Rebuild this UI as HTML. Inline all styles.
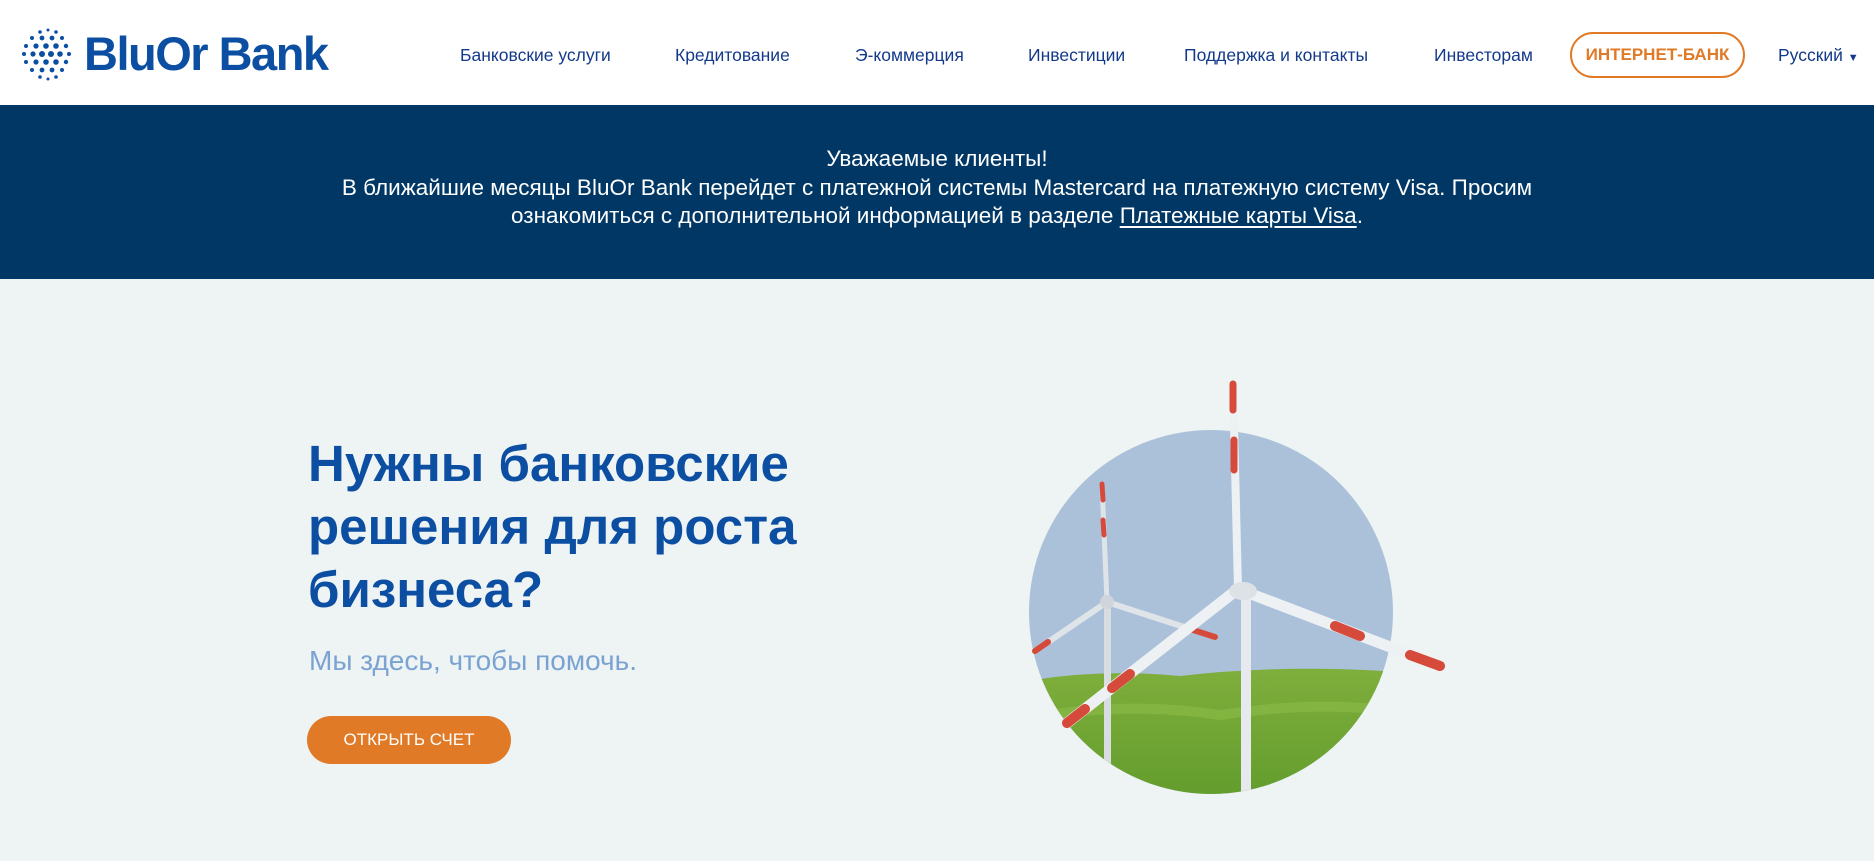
<!DOCTYPE html>
<html><head><meta charset="utf-8"><style>
*{margin:0;padding:0;box-sizing:border-box}
body{width:1874px;height:861px;overflow:hidden;font-family:"Liberation Sans",sans-serif;background:#eef3f4;position:relative}
header{position:absolute;left:0;top:0;width:1874px;height:105px;background:#fff}
.logo{position:absolute;left:84px;top:26px;font-size:47px;font-weight:bold;color:#0b4ea2;letter-spacing:-1.5px}
nav a{position:absolute;top:45px;font-size:17.5px;color:#133a8a;text-decoration:none;white-space:nowrap}
.ib{position:absolute;left:1570px;top:32px;width:175px;height:46px;border:2px solid #e07a26;border-radius:23px;color:#e07a26;font-weight:bold;font-size:17px;text-align:center;line-height:42px}
.banner{position:absolute;top:105px;left:0;width:1874px;height:174px;background:#003764;color:#fff;text-align:center;font-size:22.5px;line-height:28.5px;padding-top:40px}
.banner u{text-underline-offset:3px}
h1{position:absolute;left:308px;top:432px;font-size:51px;line-height:63px;color:#0b4ea2;font-weight:bold;letter-spacing:0px}
.sub{position:absolute;left:309px;top:645px;font-size:28px;color:#7aa3d2}
.btn{position:absolute;left:307px;top:716px;width:204px;height:48px;background:#e07a26;border-radius:24px;color:#fff;font-size:17px;text-align:center;line-height:48px}
</style></head><body>
<header>
<svg style="position:absolute;left:20px;top:26px" width="56" height="56" viewBox="0 0 56 56">
<g fill="#0b4ea2">
<circle cx="28" cy="4" r="1.5"/><circle cx="20" cy="6" r="1.8"/><circle cx="36" cy="6" r="1.8"/>
<circle cx="12" cy="12" r="2"/><circle cx="22" cy="12" r="2.4"/><circle cx="32" cy="12" r="2.4"/><circle cx="42" cy="12" r="2"/>
<circle cx="6" cy="20" r="2"/><circle cx="16" cy="20" r="2.6"/><circle cx="26" cy="20" r="2.8"/><circle cx="36" cy="20" r="2.8"/><circle cx="46" cy="20" r="2.2"/>
<circle cx="4" cy="28" r="2"/><circle cx="13" cy="28" r="2.6"/><circle cx="22" cy="28" r="3"/><circle cx="31" cy="28" r="3"/><circle cx="40" cy="28" r="2.8"/><circle cx="49" cy="28" r="2"/>
<circle cx="6" cy="36" r="2"/><circle cx="16" cy="36" r="2.6"/><circle cx="26" cy="36" r="2.8"/><circle cx="36" cy="36" r="2.8"/><circle cx="46" cy="36" r="2.2"/>
<circle cx="12" cy="44" r="2"/><circle cx="22" cy="44" r="2.4"/><circle cx="32" cy="44" r="2.4"/><circle cx="42" cy="44" r="2"/>
<circle cx="20" cy="51" r="1.8"/><circle cx="36" cy="51" r="1.8"/><circle cx="28" cy="53" r="1.5"/>
</g></svg>
<div class="logo">BluOr Bank</div>
<nav>
<a style="left:460px">Банковские услуги</a>
<a style="left:675px">Кредитование</a>
<a style="left:855px">Э-коммерция</a>
<a style="left:1028px">Инвестиции</a>
<a style="left:1184px">Поддержка и контакты</a>
<a style="left:1434px">Инвесторам</a>
<a style="left:1778px">Русский <span style="font-size:11px">▼</span></a>
</nav>
<div class="ib">ИНТЕРНЕТ-БАНК</div>
</header>
<div class="banner">Уважаемые клиенты!<br>В ближайшие месяцы BluOr Bank перейдет с платежной системы Mastercard на платежную систему Visa. Просим<br>ознакомиться с дополнительной информацией в разделе <u>Платежные карты Visa</u>.</div>
<h1>Нужны банковские<br>решения для роста<br>бизнеса?</h1>
<div class="sub">Мы здесь, чтобы помочь.</div>
<div class="btn">ОТКРЫТЬ СЧЕТ</div>
<svg style="position:absolute;left:0;top:0" width="1874" height="861">
<defs><clipPath id="c"><circle cx="1211" cy="612" r="182"/></clipPath>
<linearGradient id="g" x1="0" y1="0" x2="0" y2="1"><stop offset="0" stop-color="#7fae3c"/><stop offset="1" stop-color="#5e9a2a"/></linearGradient></defs>
<g clip-path="url(#c)">
<rect x="1000" y="400" width="420" height="420" fill="#abc1d9"/>
<path d="M1020 682 Q1100 668 1180 676 Q1280 664 1400 672 L1400 820 L1020 820Z" fill="url(#g)"/>
<path d="M1020 720 Q1120 700 1220 715 Q1320 700 1400 712" stroke="#8cbc48" stroke-width="10" fill="none" opacity=".6"/>
<rect x="1104" y="600" width="7" height="220" fill="#d8dde2"/>
<rect x="1241" y="588" width="10" height="240" fill="#e6eaee"/>
</g>
<g stroke-linecap="round">
<path d="M1107 602 L1102 484" stroke="#dfe4e8" stroke-width="5"/>
<path d="M1102 484 L1103 500 M1103 520 L1104 535" stroke="#d54a3a" stroke-width="5"/>
<path d="M1107 602 L1215 637" stroke="#dfe4e8" stroke-width="6"/>
<path d="M1190 629 L1215 637" stroke="#d54a3a" stroke-width="6"/>
<path d="M1107 602 L1035 651" stroke="#dfe4e8" stroke-width="6"/>
<path d="M1035 651 L1048 642" stroke="#d54a3a" stroke-width="6"/>
<circle cx="1107" cy="602" r="7" fill="#cfd5db"/>
<path d="M1238 589 L1233 384" stroke="#eef1f4" stroke-width="8"/>
<path d="M1233 384 L1233 410 M1234 440 L1234 470" stroke="#d54a3a" stroke-width="7"/>
<path d="M1238 589 L1440 666" stroke="#eef1f4" stroke-width="11"/>
<path d="M1335 626 L1360 636 M1410 655 L1440 666" stroke="#d54a3a" stroke-width="10"/>
<path d="M1238 589 L1067 723" stroke="#eef1f4" stroke-width="11"/>
<path d="M1067 723 L1085 709 M1112 688 L1130 674" stroke="#d54a3a" stroke-width="10"/>
<ellipse cx="1243" cy="591" rx="14" ry="9" fill="#dde2e6"/>
</g>
</svg>
</body></html>
